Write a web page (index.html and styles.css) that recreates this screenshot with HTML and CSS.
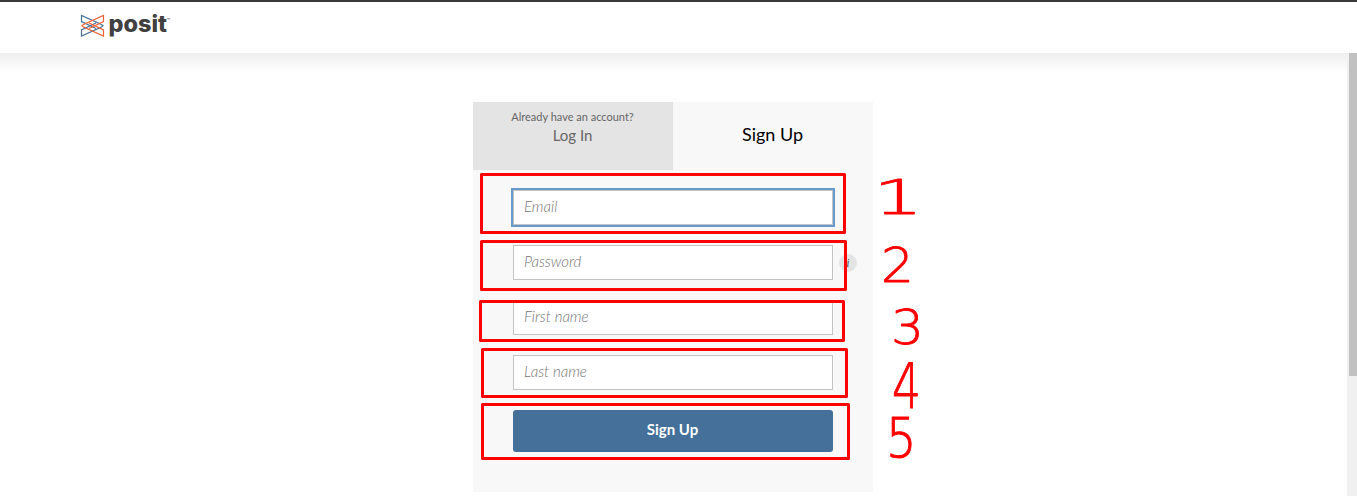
FILE: index.html
```html
<!DOCTYPE html>
<html lang="en">
<head>
<meta charset="utf-8">
<title>Sign Up</title>
<link rel="stylesheet" href="styles.css">
</head>
<body>
<header class="header">
  <svg class="logo" width="96" height="30" viewBox="0 0 96 30">
    <g fill="none" stroke-width="1.2">
      <path stroke="#447099" d="M16 17.500L1.500 10.500V4.500L21.500 13.500L23 14.800L21.500 16L1.500 25V19L16 12"/>
      <path stroke="#ee6331" d="M9 17.500L23.500 10.500V4.500L3.500 13.500L2 14.800L3.500 16L23.500 25V19L9 12"/>
    </g>
    <text class="wordmark" x="28.500" y="20.500" textLength="58.500" lengthAdjust="spacingAndGlyphs">posit</text>
    <text class="trademark" x="86.500" y="11.500">™</text>
  </svg>
</header>
<div class="page">
  <main class="content">
    <section class="card">
      <nav class="tabs">
        <a class="tab tab-login"><small class="hint">Already have an account?</small><span>Log In</span></a>
        <a class="tab tab-signup">Sign Up</a>
      </nav>
      <form class="form">
        <input class="field focused" type="text" placeholder="Email">
        <div class="password-row">
          <input class="field" type="text" placeholder="Password"><span class="info">i</span>
        </div>
        <input class="field" type="text" placeholder="First name">
        <input class="field" type="text" placeholder="Last name">
        <button class="submit" type="button">Sign Up</button>
      </form>
    </section>
  </main>
  <div class="scrollbar"><div class="thumb"></div></div>
</div>
<svg class="notes" width="1357" height="496" viewBox="0 0 1357 496">
  <g class="frames">
    <rect x="481.500" y="174.500" width="363" height="58"/>
    <rect x="481.500" y="241.500" width="364" height="48"/>
    <rect x="480.500" y="301.500" width="363" height="39"/>
    <rect x="482.500" y="349.500" width="364" height="47"/>
    <rect x="482.500" y="404.500" width="366" height="54"/>
  </g>
  <g class="digits">
    <text transform="translate(873 214) scale(1.650 1)">1</text>
    <text transform="translate(881 282) scale(1.080 1)">2</text>
    <text transform="translate(891 344) scale(1.080 1)">3</text>
    <text transform="translate(892 408) scale(.950 1.300)">4</text>
    <text transform="translate(886 457) scale(1 1.150)">5</text>
  </g>
</svg>
</body>
</html>
```
FILE: styles.css
```css
* { box-sizing: border-box; }
body {
  margin: 0;
  height: 496px;
  overflow: hidden;
  background: #fff;
  font-family: Lato, "Open Sans", sans-serif;
  display: flex;
  flex-direction: column;
}
.header {
  height: 53px;
  flex: none;
  border-top: 2px solid #3a3a3c;
  padding: 9px 0 0 80px;
}
.logo { display: block; }
.wordmark {
  font: 800 23px Inter, sans-serif;
  fill: #404041;
}
.trademark { font: 6px Inter, sans-serif; fill: #404041; }
.page {
  flex: 1;
  display: flex;
  background: linear-gradient(#efefef, #fff 20px);
}
.content {
  flex: 1;
  padding: 49px 0 0 473px;
}
.card {
  width: 400px;
  height: 390px;
  background: #f8f8f8;
}
.tabs { display: flex; height: 68px; }
.tab {
  width: 200px;
  display: flex;
  flex-direction: column;
  align-items: center;
}
.tab-login {
  background: #e4e4e4;
  color: #666;
  font-size: 15px;
  line-height: 20px;
  padding: 7px 1px 0 0;
}
.hint { font-size: 11px; line-height: 15px; margin-bottom: 1px; }
.tab-signup {
  color: #000;
  font-size: 18px;
  line-height: 22px;
  padding: 21px 1px 0 0;
}
.form {
  padding: 20px 0 0 40px;
  display: flex;
  flex-direction: column;
  gap: 20px;
}
.field {
  display: block;
  flex: none;
  width: 320px;
  height: 35px;
  border: 1px solid #c4c4c4;
  background: #fff;
  padding: 0 10px 4px;
  margin: 0;
  outline: 0;
  font: italic 300 15px Lato, sans-serif;
}
.field::placeholder { color: #757575; opacity: 1; }
.focused { box-shadow: 0 0 0 2px #6699cc; }
.password-row { display: flex; align-items: center; gap: 6px; }
.info {
  width: 18px;
  height: 18px;
  border-radius: 50%;
  background: #e4e4e4;
  color: #555;
  font: italic 12px/18px "Liberation Serif", serif;
  text-align: center;
}
.submit {
  width: 320px;
  height: 42px;
  border: 0;
  border-radius: 3px;
  background: #447099;
  color: #fff;
  font: bold 15px Lato, sans-serif;
  padding: 0 1px 4px 0;
}
.scrollbar {
  width: 10px;
  background: #f0f0f0;
  padding-left: 2px;
}
.thumb { height: 323px; background: #c1c1c1; }
.notes { position: absolute; top: 0; left: 0; pointer-events: none; }
.frames { fill: none; stroke: #f00; stroke-width: 3; stroke-linejoin: round; }
.digits {
  font: 200 48px "DejaVu Sans", sans-serif;
  fill: #f00;
  stroke: #f00;
  stroke-width: .8;
  stroke-linejoin: round;
}
```
